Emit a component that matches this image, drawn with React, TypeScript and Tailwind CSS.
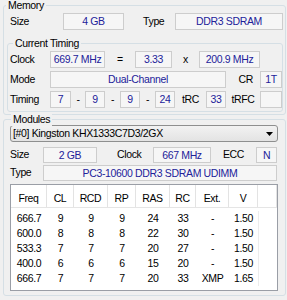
import type { ReactNode } from "react";

const spd = [
  ["666.7", "9", "9", "9", "24", "33", "-", "1.50"],
  ["600.0", "8", "8", "8", "22", "30", "-", "1.50"],
  ["533.3", "7", "7", "7", "20", "27", "-", "1.50"],
  ["400.0", "6", "6", "6", "15", "20", "-", "1.50"],
  ["666.7", "7", "7", "7", "20", "33", "XMP", "1.65"],
];

const headers = ["Freq", "CL", "RCD", "RP", "RAS", "RC", "Ext.", "V", ""];

function Group({ title, titleLeft, className, children }: { title: string; titleLeft: string; className: string; children: ReactNode }) {
  return (
    <div className={`relative border border-[#d5dfe5] rounded-[3px] ${className}`}>
      <span className={`absolute -top-[8px] ${titleLeft} bg-[#f0f0f0] px-[2px] leading-[14px]`}>{title}</span>
      {children}
    </div>
  );
}

function Val({ w, h = "h-[17px]", children }: { w: string; h?: string; children?: ReactNode }) {
  return (
    <div className={`${w} ${h} flex items-center justify-center whitespace-nowrap border border-[#cdcdcd] bg-[#f6f6f6] text-[#22229a] leading-none`}>
      {children}
    </div>
  );
}

export default function App() {
  return (
    <div className="w-[287px] h-[300px] overflow-hidden bg-[#f0f0f0] text-[10.5px] tracking-[-0.35px] text-black font-['Liberation_Sans',Arial,sans-serif] pt-[5px] whitespace-nowrap">
      {/* Memory */}
      <Group title="Memory" titleLeft="left-[2px]" className="ml-[3px] w-[283px]">
        <div className="flex items-center mt-[7px] pl-[6px]">
          <span className="w-[53px]">Size</span>
          <Val w="w-[61px]">4 GB</Val>
          <span className="w-[32px] ml-[19px]">Type</span>
          <Val w="w-[108px]">DDR3 SDRAM</Val>
        </div>

        <Group title="Current Timing" titleLeft="left-[5px]" className="ml-[3px] mr-[2px] mt-[13px] mb-[2px] pt-[7px] pb-[3px] pl-[2px]">
          <div className="flex items-center">
            <span className="w-[40px]">Clock</span>
            <Val w="w-[55px]">669.7 MHz</Val>
            <span className="w-[30px] text-center">=</span>
            <Val w="w-[37px]">3.33</Val>
            <span className="w-[27px] text-center">x</span>
            <Val w="w-[61px]">200.9 MHz</Val>
          </div>
          <div className="flex items-center mt-[3px]">
            <span className="w-[40px]">Mode</span>
            <Val w="w-[176px]">Dual-Channel</Val>
            <span className="w-[34px] text-right pr-[7px]">CR</span>
            <Val w="w-[22px]">1T</Val>
          </div>
          <div className="flex items-center mt-[3px]">
            <span className="w-[40px]">Timing</span>
            <Val w="w-[21px]">7</Val>
            <span className="w-[14px] text-center">-</span>
            <Val w="w-[20px]">9</Val>
            <span className="w-[15px] text-center">-</span>
            <Val w="w-[20px]">9</Val>
            <span className="w-[15px] text-center">-</span>
            <Val w="w-[20px]">24</Val>
            <span className="w-[31px] text-center">tRC</span>
            <Val w="w-[20px]">33</Val>
            <span className="w-[34px] text-center">tRFC</span>
            <Val w="w-[22px]" />
          </div>
        </Group>
      </Group>

      {/* Modules */}
      <Group title="Modules" titleLeft="left-[7px]" className="ml-[3px] w-[283px] mt-[4px] pb-[4px]">
        <div className="ml-[6px] mt-[5px] w-[268px] h-[17px] flex items-center justify-between rounded-[3px] border border-[#8e8f8f] bg-gradient-to-b from-[#f2f2f2] to-[#e3e3e3] pl-[2px] pr-[4px]">
          <span className="leading-none">[#0] Kingston KHX1333C7D3/2GX</span>
          <svg width="7" height="4" viewBox="0 0 7 4">
            <path d="M0 0h7L3.5 4z" fill="#000" />
          </svg>
        </div>

        <div className="flex items-center mt-[5px] pl-[6px]">
          <span className="w-[33px]">Size</span>
          <Val w="w-[54px]" h="h-[16px]">2 GB</Val>
          <span className="w-[56px] pl-[20px]">Clock</span>
          <Val w="w-[58px]" h="h-[16px]">667 MHz</Val>
          <span className="w-[45px] text-center">ECC</span>
          <Val w="w-[21px]" h="h-[16px]">N</Val>
        </div>
        <div className="flex items-center mt-[2px] pl-[6px]">
          <span className="w-[33px]">Type</span>
          <Val w="w-[234px]" h="h-[16px]">PC3-10600 DDR3 SDRAM UDIMM</Val>
        </div>

        <div className="ml-[6px] mt-[3px] w-[268px] h-[107px] border border-[#9a9ea6] bg-white">
          <div className="grid grid-cols-[36px_27px_34px_28px_34px_26px_33px_29px_19px] h-[23px] border-b border-[#e5e5e5]">
            {headers.map((h, i) => (
              <div key={i} className="border-r border-[#e3e3e3] text-center pt-[7px] leading-[12px]">
                {h}
              </div>
            ))}
          </div>
          <div className="pt-[3px]">
            {spd.map((row, r) => (
              <div key={r} className="grid grid-cols-[36px_27px_34px_28px_34px_26px_33px_29px_19px] h-[15px] items-center">
                {row.map((c, i) => (
                  <div key={i} className="text-center leading-[15px]">
                    {c}
                  </div>
                ))}
                <div className="h-[15px] border-l border-[#ececec]" />
              </div>
            ))}
          </div>
        </div>
      </Group>
    </div>
  );
}
